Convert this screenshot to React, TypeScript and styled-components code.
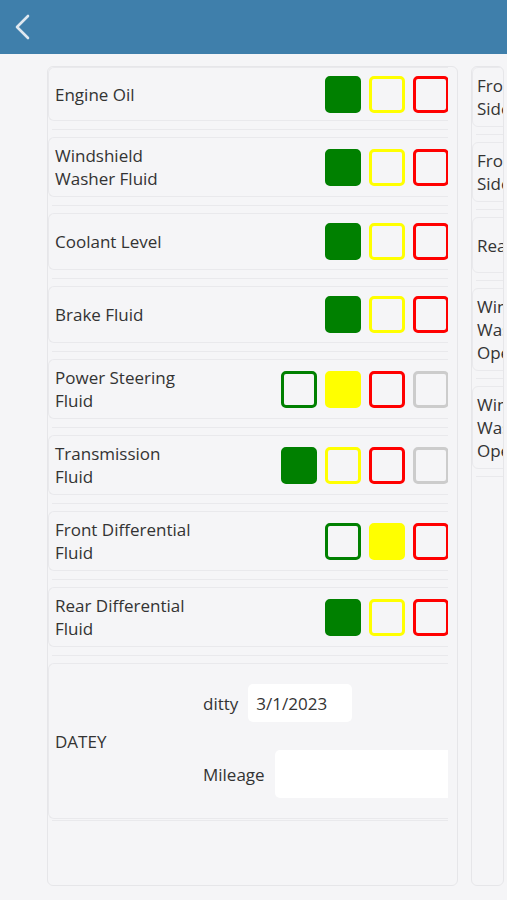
import React from "react";
import styled, { createGlobalStyle } from "styled-components";

const Global = createGlobalStyle`
  html, body { margin: 0; padding: 0; background: #f5f5f7; }
  body { font-family: "Open Sans", "Noto Sans", sans-serif; color: #333; overflow: hidden; }
  * { box-sizing: border-box; }
`;

const Header = styled.header`
  height: 54px;
  background: #3f7fab;
  display: flex;
  align-items: center;
  padding-left: 14px;
`;

const BackButton = styled.button`
  border: none;
  background: none;
  padding: 0;
  width: 20px;
  height: 28px;
  display: flex;
  align-items: center;
  cursor: pointer;
`;

const Main = styled.main`
  display: flex;
  gap: 13px;
  padding: 12px 0 0 47px;
  height: 832px;
  overflow: hidden;
`;

const Card = styled.section<{ $w: number }>`
  flex: 0 0 ${(p) => p.$w}px;
  height: 820px;
  border: 1px solid #e6e6e9;
  border-radius: 6px;
  background: #f5f5f7;
  padding: 0 ${(p) => (p.$w > 100 ? 9 : 0)}px 0 0;
  overflow: hidden;
`;

const List = styled.div`
  overflow: hidden;
  height: 100%;
`;

const Row = styled.div`
  display: flex;
  align-items: center;
  justify-content: space-between;
  min-height: 57px;
  margin-right: -1px;
  padding: 6px 0 6px 6px;
  border: 1px solid #e9e9ec;
  border-right: none;
  border-radius: 6px 0 0 6px;
  &:first-child {
    min-height: 54px;
  }
`;

const Sep = styled.div<{ $last?: boolean }>`
  height: 1px;
  margin: ${(p) => (p.$last ? "1px 0 0 4px" : "8px 0 7px 4px")};
  background: #e9e9ec;
`;

const Label = styled.div<{ $max?: number }>`
  font-size: 17px;
  line-height: 23px;
  max-width: ${(p) => p.$max ?? 140}px;
  white-space: normal;
  flex-shrink: 0;
`;

const Squares = styled.div`
  display: flex;
  gap: 8px;
`;

const Square = styled.div<{ $c: string; $on?: boolean }>`
  width: 36px;
  height: 37px;
  border-radius: 5px;
  border: 3px solid ${(p) => p.$c};
  background: ${(p) => (p.$on ? p.$c : "transparent")};
`;

const DateBox = styled.div`
  display: flex;
  align-items: center;
  height: 156px;
  padding-left: 6px;
  border: 1px solid #e9e9ec;
  border-right: none;
  border-radius: 6px 0 0 6px;
`;

const DateLabel = styled.div`
  flex: 0 0 148px;
  font-size: 17px;
  line-height: 23px;
`;

const Fields = styled.div`
  display: flex;
  flex-direction: column;
  gap: 28px;
`;

const Field = styled.label`
  display: flex;
  align-items: center;
  gap: 10px;
  font-size: 17px;
  white-space: nowrap;
`;

const Input = styled.div<{ $w: number; $h: number }>`
  width: ${(p) => p.$w}px;
  height: ${(p) => p.$h}px;
  background: #fff;
  border-radius: 5px;
  padding-left: 8px;
  display: flex;
  align-items: center;
  font-size: 17px;
  flex-shrink: 0;
`;

const SideRow = styled.div`
  display: flex;
  align-items: center;
  min-height: 56px;
  width: 400px;
  padding: 6px 0 6px 4px;
  border: 1px solid #e9e9ec;
  border-radius: 6px;
`;

const SideSep = styled.div`
  height: 1px;
  width: 400px;
  margin: 7px 0 7px 4px;
  background: #e9e9ec;
`;

type Item = { label: string; colors: string[]; on: number };
const G = "#008000";
const Y = "#ffff00";
const R = "#ff0000";
const GR = "#cccccc";

const items: Item[] = [
  { label: "Engine Oil", colors: [G, Y, R], on: 0 },
  { label: "Windshield Washer Fluid", colors: [G, Y, R], on: 0 },
  { label: "Coolant Level", colors: [G, Y, R], on: 0 },
  { label: "Brake Fluid", colors: [G, Y, R], on: 0 },
  { label: "Power Steering Fluid", colors: [G, Y, R, GR], on: 1 },
  { label: "Transmission Fluid", colors: [G, Y, R, GR], on: 0 },
  { label: "Front Differential Fluid", colors: [G, Y, R], on: 1 },
  { label: "Rear Differential Fluid", colors: [G, Y, R], on: 0 },
];

const sideItems = [
  "Front Left Side",
  "Front Right Side",
  "Rear Tires",
  "Windshield Washer Operation",
  "Windshield Washer Operations",
];

export default function App() {
  return (
    <>
      <Global />
      <Header>
        <BackButton aria-label="Back">
          <svg width="16" height="26" viewBox="0 0 16 26">
            <polyline points="14,2 3,13 14,24" fill="none" stroke="#dfe8f0" strokeWidth="2.6" strokeLinecap="round" strokeLinejoin="round" />
          </svg>
        </BackButton>
      </Header>
      <Main>
        <Card $w={411}>
          <List>
            {items.map((it) => (
              <React.Fragment key={it.label}>
                <Row>
                  <Label>{it.label}</Label>
                  <Squares>
                    {it.colors.map((c, i) => (
                      <Square key={i} $c={c} $on={i === it.on} />
                    ))}
                  </Squares>
                </Row>
                <Sep />
              </React.Fragment>
            ))}
            <DateBox>
              <DateLabel>DATEY</DateLabel>
              <Fields>
                <Field>
                  ditty
                  <Input $w={104} $h={38}>3/1/2023</Input>
                </Field>
                <Field>
                  Mileage
                  <Input $w={200} $h={48} />
                </Field>
              </Fields>
            </DateBox>
            <Sep $last />
          </List>
        </Card>
        <Card $w={33}>
          {sideItems.map((s, i) => (
            <React.Fragment key={i}>
              <SideRow>
                <Label $max={105}>{s}</Label>
              </SideRow>
              <SideSep />
            </React.Fragment>
          ))}
        </Card>
      </Main>
    </>
  );
}
